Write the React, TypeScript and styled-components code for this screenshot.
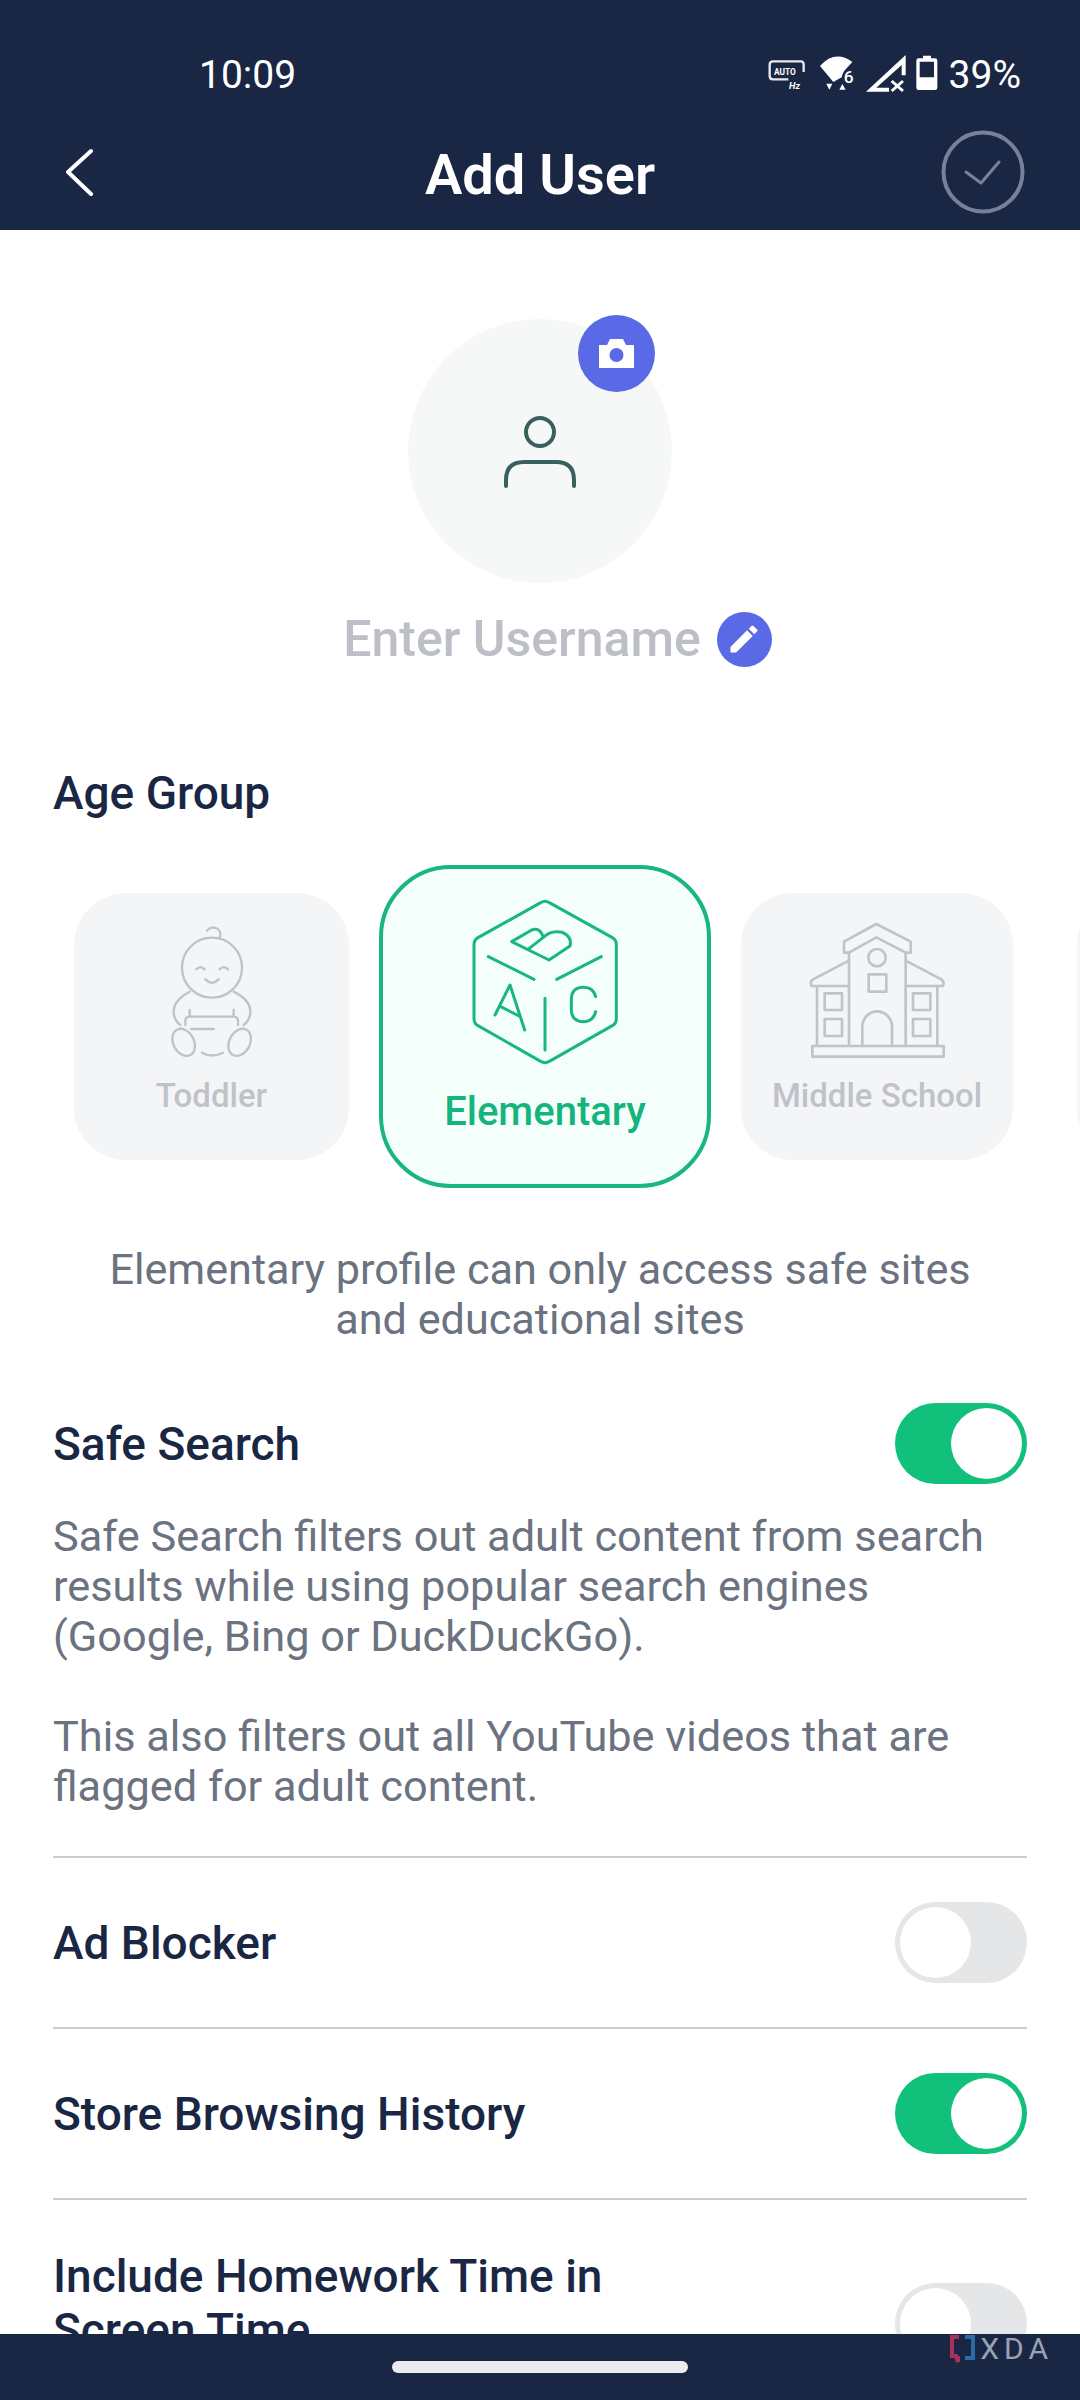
import React from "react";
import styled, { createGlobalStyle } from "styled-components";

const navy = "#1a2744";
const violet = "#5a6ae6";
const green = "#1ab584";
const muted = "#bfc2c9";

const Global = createGlobalStyle`
  html, body { margin: 0; padding: 0; background: #fff; }
  body { font-family: Roboto, "Liberation Sans", sans-serif; }
`;

const Screen = styled.div`
  position: relative;
  width: 1080px;
  height: 2400px;
  display: flex;
  flex-direction: column;
  overflow: hidden;
  background: #fff;
`;

const Header = styled.header`
  flex: none;
  height: 230px;
  background: ${navy};
  color: #fff;
`;

const StatusBar = styled.div`
  height: 100px;
  display: flex;
  align-items: flex-end;
  padding: 0 59px 0 199px;
  font-size: 39px;
  line-height: 50px;
`;

const Spacer = styled.div`
  flex: 1;
`;

const TitleBar = styled.div`
  height: 130px;
  box-sizing: border-box;
  padding: 14px 55px 0;
  display: grid;
  grid-template-columns: 1fr auto 1fr;
  align-items: center;
`;

const BackButton = styled.div`
  display: flex;
  justify-self: start;
  padding-left: 11px;
`;

const CheckButton = styled.div`
  display: flex;
  justify-self: end;
`;

const Title = styled.h1`
  margin: 5px 0 0;
  font-size: 56px;
  font-weight: 600;
  line-height: 60px;
`;

const Main = styled.main`
  flex: 1;
  min-height: 0;
  overflow: hidden;
  padding-top: 89px;
`;

const AvatarWrap = styled.div`
  display: flex;
  justify-content: center;
`;

const Avatar = styled.div`
  position: relative;
  width: 264px;
  height: 264px;
  border-radius: 50%;
  background: #f6f8f8;
  display: flex;
  align-items: center;
  justify-content: center;
`;

const CameraBadge = styled.div`
  position: absolute;
  top: -4px;
  left: 170px;
  width: 77px;
  height: 77px;
  border-radius: 50%;
  background: ${violet};
  display: flex;
  align-items: center;
  justify-content: center;
`;

const NameRow = styled.div`
  margin-top: 28px;
  padding-left: 35px;
  display: flex;
  align-items: center;
  justify-content: center;
  gap: 16px;
`;

const NameText = styled.div`
  font-size: 50px;
  font-weight: 500;
  line-height: 56px;
  color: #bcbfc6;
`;

const PencilBadge = styled.div`
  width: 55px;
  height: 55px;
  border-radius: 50%;
  background: ${violet};
  display: flex;
  align-items: center;
  justify-content: center;
`;

const SectionTitle = styled.h2`
  margin: 99px 0 0;
  padding: 0 53px;
  font-size: 46px;
  font-weight: 500;
  line-height: 54px;
  color: ${navy};
`;

const Cards = styled.div`
  margin-top: 45px;
  padding-left: 74px;
  display: flex;
  align-items: center;
  gap: 30px;
  overflow: hidden;
`;

const Card = styled.div<{ $w: number }>`
  flex: none;
  box-sizing: border-box;
  width: ${(p) => p.$w}px;
  height: 267px;
  border-radius: 52px;
  background: #f4f5f7;
  display: flex;
  flex-direction: column;
  align-items: center;
  padding-top: 17px;
  color: ${muted};
  font-size: 33px;
  font-weight: 500;
  line-height: 40px;
`;

const ActiveCard = styled(Card)`
  height: 323px;
  border-radius: 72px;
  border: 4px solid ${green};
  background: #f4fffb;
  color: #14b57d;
  font-size: 40px;
  padding-top: 21px;
  line-height: 44px;
`;

const SliverCard = styled(Card)`
  margin-left: 34px;
`;

const CardLabel = styled.div<{ $top: number }>`
  margin-top: ${(p) => p.$top}px;
`;

const Blurb = styled.p`
  margin: 57px 0 0;
  text-align: center;
  font-size: 43.2px;
  line-height: 50px;
  color: #6b7280;
`;

const Rows = styled.div`
  margin: 58px 53px 0;
`;

const Row = styled.div<{ $divider?: boolean }>`
  display: flex;
  align-items: center;
  justify-content: space-between;
  height: 171px;
  box-sizing: border-box;
  ${(p) => (p.$divider ? "border-bottom: 2px solid #c9ccd0;" : "")}
`;

const SearchHead = styled.div`
  display: flex;
  align-items: center;
  justify-content: space-between;
  height: 81px;
`;

const RowLabel = styled.div`
  font-size: 46px;
  font-weight: 500;
  line-height: 54px;
  color: ${navy};
`;

const SearchBlock = styled.div`
  padding-bottom: 44px;
  border-bottom: 2px solid #c9ccd0;
`;

const Body = styled.p`
  margin: 0;
  font-size: 43.3px;
  line-height: 50px;
  color: #6b7280;
  white-space: pre-line;
`;

const SearchBody = styled(Body)`
  margin-top: 28px;
`;

const HomeworkRow = styled.div`
  display: flex;
  align-items: flex-start;
  justify-content: space-between;
  padding-top: 49px;
`;

const HomeworkLabel = styled(RowLabel)`
  width: 640px;
`;

const HomeworkSwitch = styled.div`
  margin-top: 34px;
`;

const Switch = styled.div<{ $on?: boolean }>`
  flex: none;
  box-sizing: border-box;
  width: 132px;
  height: 81px;
  padding: 5px;
  border-radius: 41px;
  display: flex;
  justify-content: ${(p) => (p.$on ? "flex-end" : "flex-start")};
  background: ${(p) => (p.$on ? "#10c07b" : "#e5e6e8")};
`;

const Knob = styled.div`
  width: 71px;
  height: 71px;
  border-radius: 50%;
  background: #fff;
`;

const BottomNav = styled.footer`
  flex: none;
  height: 66px;
  background: ${navy};
  display: flex;
  justify-content: center;
  padding-top: 27px;
  box-sizing: border-box;
`;

const HomeHandle = styled.div`
  width: 296px;
  height: 12px;
  border-radius: 6px;
  background: #eaecef;
`;

const Watermark = styled.div`
  position: absolute;
  right: 27px;
  top: 2335px;
  display: flex;
  align-items: flex-start;
  gap: 4px;
  color: #9aa3b2;
  font-size: 30px;
  line-height: 27px;
  font-weight: 400;
  letter-spacing: 5px;
`;

const StatusIcons = () => (
  <svg width="200" height="60" viewBox="0 0 600 180" fill="#fff">
    <path
      d="M118 118H72q-10 0-10-10V74q0-10 10-10h84q8 0 8 10v22"
      fill="none"
      stroke="#e8eaee"
      strokeWidth="7"
    />
    <text x="75" y="104" fontSize="25" fontWeight="700" fontFamily="Roboto, sans-serif">AUTO</text>
    <text x="120" y="147" fontSize="28" fontStyle="italic" fontWeight="700" fontFamily="Roboto, sans-serif">Hz</text>
    <path d="M213 78Q258 28 310 66L286 92Q280 100 278 112L253 126Z" />
    <text x="284" y="129" fontSize="52" fontWeight="500" fontFamily="Roboto, sans-serif">6</text>
    <path d="M232 131H250L241 149Z" />
    <path d="M271 149H290L280 132Z" />
    <path d="M351 155L470 45V106H458V75L382 143H420V155Z" />
    <path d="M428 123L462 153M462 123L428 153" fill="none" stroke="#fff" strokeWidth="9" />
    <path
      fillRule="evenodd"
      d="M522 55V47H546V55H558Q565 55 565 62V143Q565 150 558 150H509Q502 150 502 143V62Q502 55 509 55ZM512 65V112H555V65Z"
    />
  </svg>
);

const BackIcon = () => (
  <svg width="28" height="48" viewBox="0 0 28 48" fill="none" stroke="#fff" strokeWidth="4" strokeLinecap="round" strokeLinejoin="round">
    <path d="M25 3L2 24L25 46" />
  </svg>
);

const CheckIcon = () => (
  <svg width="84" height="84" viewBox="0 0 84 84" fill="none" stroke="#77829a" strokeWidth="4" strokeLinejoin="round">
    <circle cx="42" cy="42" r="39.5" />
    <path d="M25 42L40 53L58 32" strokeWidth="3" strokeLinecap="round" />
  </svg>
);

const PersonIcon = () => (
  <svg width="72" height="74" viewBox="0 0 72 74" fill="none" stroke="#38605f" strokeWidth="4" strokeLinecap="round">
    <circle cx="36" cy="18" r="14" />
    <path d="M2 72V66Q2 48 20 48H52Q70 48 70 66V72" />
  </svg>
);

const CameraIcon = () => (
  <svg width="35" height="29" viewBox="0 0 35 29" fill="#fff">
    <path fillRule="evenodd" d="M0 6H8L11 0H24L27 6H35V29H0ZM17.5 9A7 7 0 1 0 17.5 23A7 7 0 1 0 17.5 9Z" />
  </svg>
);

const PencilIcon = () => (
  <svg width="36" height="36" viewBox="0 0 24 24" fill="#fff">
    <path d="M3 17.25V21h3.75L17.81 9.94l-3.75-3.75L3 17.25zM20.71 7.04a1 1 0 0 0 0-1.41l-2.34-2.34a1 1 0 0 0-1.41 0l-1.83 1.83 3.75 3.75 1.83-1.83z" />
  </svg>
);

const BabyIcon = () => (
  <svg width="120" height="160" viewBox="5 0 360 480" fill="none" stroke="#bfc2c7" strokeWidth="7" strokeLinecap="round" strokeLinejoin="round">
    <circle cx="185" cy="173" r="90" />
    <path d="M170 62A22 20 0 1 1 205 86" />
    <path d="M138 178Q150 165 163 178M208 178Q220 165 233 178M165 208Q185 228 205 208" />
    <path d="M118 245Q70 270 70 305Q70 330 90 345M250 245Q300 270 300 305Q300 330 280 345" />
    <path d="M118 300V320M250 300V320M105 345V333Q105 320 118 320H250Q263 320 263 333V345" />
    <path d="M122 357H190M155 428Q185 445 218 428" />
    <ellipse cx="100" cy="397" rx="31" ry="43" transform="rotate(-28 100 397)" />
    <ellipse cx="268" cy="397" rx="31" ry="43" transform="rotate(28 268 397)" />
  </svg>
);

const CubeIcon = () => (
  <svg width="180" height="190" viewBox="13 0 540 570" fill="none" stroke="#1ab584" strokeWidth="9" strokeLinecap="round" strokeLinejoin="round">
    <path d="M270 38Q283 30 296 38L485 143Q497 150 497 164V386Q497 400 485 407L296 514Q283 522 270 514L82 407Q70 400 70 386V164Q70 150 82 143Z" />
    <path d="M113 200L250 268M318 268L452 200M283 325V480" />
    <path d="M133 375L178 285L222 420M150 350L205 378" />
    <path d="M435 320Q428 292 398 292Q362 292 362 330V358Q362 395 398 395Q428 395 435 365" />
    <path d="M183 155L243 120Q268 110 278 142Q300 120 335 127Q365 140 358 168L295 210ZM232 178L278 142" />
  </svg>
);

const SchoolIcon = () => (
  <svg width="150" height="150" viewBox="7 0 450 450" fill="none" stroke="#c0c3c9" strokeWidth="8" strokeLinejoin="round">
    <path d="M148 128H133V95L230 42L333 95V128H318L230 82Z" />
    <path d="M148 128V408M318 128V408" />
    <circle cx="232" cy="143" r="26" />
    <rect x="207" y="193" width="53" height="52" />
    <path d="M148 152L40 208Q30 215 35 228H148M318 152L425 208Q435 215 430 228H318" />
    <path d="M52 228V408M413 228V408" />
    <rect x="75" y="250" width="52" height="50" />
    <rect x="75" y="327" width="52" height="51" />
    <rect x="340" y="250" width="52" height="50" />
    <rect x="340" y="327" width="52" height="51" />
    <path d="M188 408V345A45 48 0 0 1 277 345V408" />
    <rect x="38" y="408" width="394" height="32" />
  </svg>
);

const XdaMark = () => (
  <svg width="26" height="30" viewBox="0 0 26 30" fill="none" strokeWidth="4">
    <path d="M9 2H2V21H6L8 27V21" stroke="#a8325c" />
    <path d="M15 2H23V23H15" stroke="#2a6ca8" />
  </svg>
);

export default function App() {
  return (
    <Screen>
      <Global />
      <Header>
        <StatusBar>
          <span>10:09</span>
          <Spacer />
          <StatusIcons />
          <span>39%</span>
        </StatusBar>
        <TitleBar>
          <BackButton>
            <BackIcon />
          </BackButton>
          <Title>Add User</Title>
          <CheckButton>
            <CheckIcon />
          </CheckButton>
        </TitleBar>
      </Header>
      <Main>
        <AvatarWrap>
          <Avatar>
            <PersonIcon />
            <CameraBadge>
              <CameraIcon />
            </CameraBadge>
          </Avatar>
        </AvatarWrap>
        <NameRow>
          <NameText>Enter Username</NameText>
          <PencilBadge>
            <PencilIcon />
          </PencilBadge>
        </NameRow>
        <SectionTitle>Age Group</SectionTitle>
        <Cards>
          <Card $w={275}>
            <BabyIcon />
            <CardLabel $top={6}>Toddler</CardLabel>
          </Card>
          <ActiveCard $w={332}>
            <CubeIcon />
            <CardLabel $top={10}>Elementary</CardLabel>
          </ActiveCard>
          <Card $w={272}>
            <SchoolIcon />
            <CardLabel $top={16}>Middle School</CardLabel>
          </Card>
          <SliverCard $w={272} />
        </Cards>
        <Blurb>
          Elementary profile can only access safe sites
          <br />
          and educational sites
        </Blurb>
        <Rows>
          <SearchBlock>
            <SearchHead>
              <RowLabel>Safe Search</RowLabel>
              <Switch $on>
                <Knob />
              </Switch>
            </SearchHead>
            <SearchBody>
              {"Safe Search filters out adult content from search\nresults while using popular search engines\n(Google, Bing or DuckDuckGo).\n\nThis also filters out all YouTube videos that are\nflagged for adult content."}
            </SearchBody>
          </SearchBlock>
          <Row $divider>
            <RowLabel>Ad Blocker</RowLabel>
            <Switch>
              <Knob />
            </Switch>
          </Row>
          <Row $divider>
            <RowLabel>Store Browsing History</RowLabel>
            <Switch $on>
              <Knob />
            </Switch>
          </Row>
          <HomeworkRow>
            <HomeworkLabel>Include Homework Time in Screen Time</HomeworkLabel>
            <HomeworkSwitch>
              <Switch>
                <Knob />
              </Switch>
            </HomeworkSwitch>
          </HomeworkRow>
        </Rows>
      </Main>
      <BottomNav>
        <HomeHandle />
      </BottomNav>
      <Watermark>
        <XdaMark />
        <span>XDA</span>
      </Watermark>
    </Screen>
  );
}
